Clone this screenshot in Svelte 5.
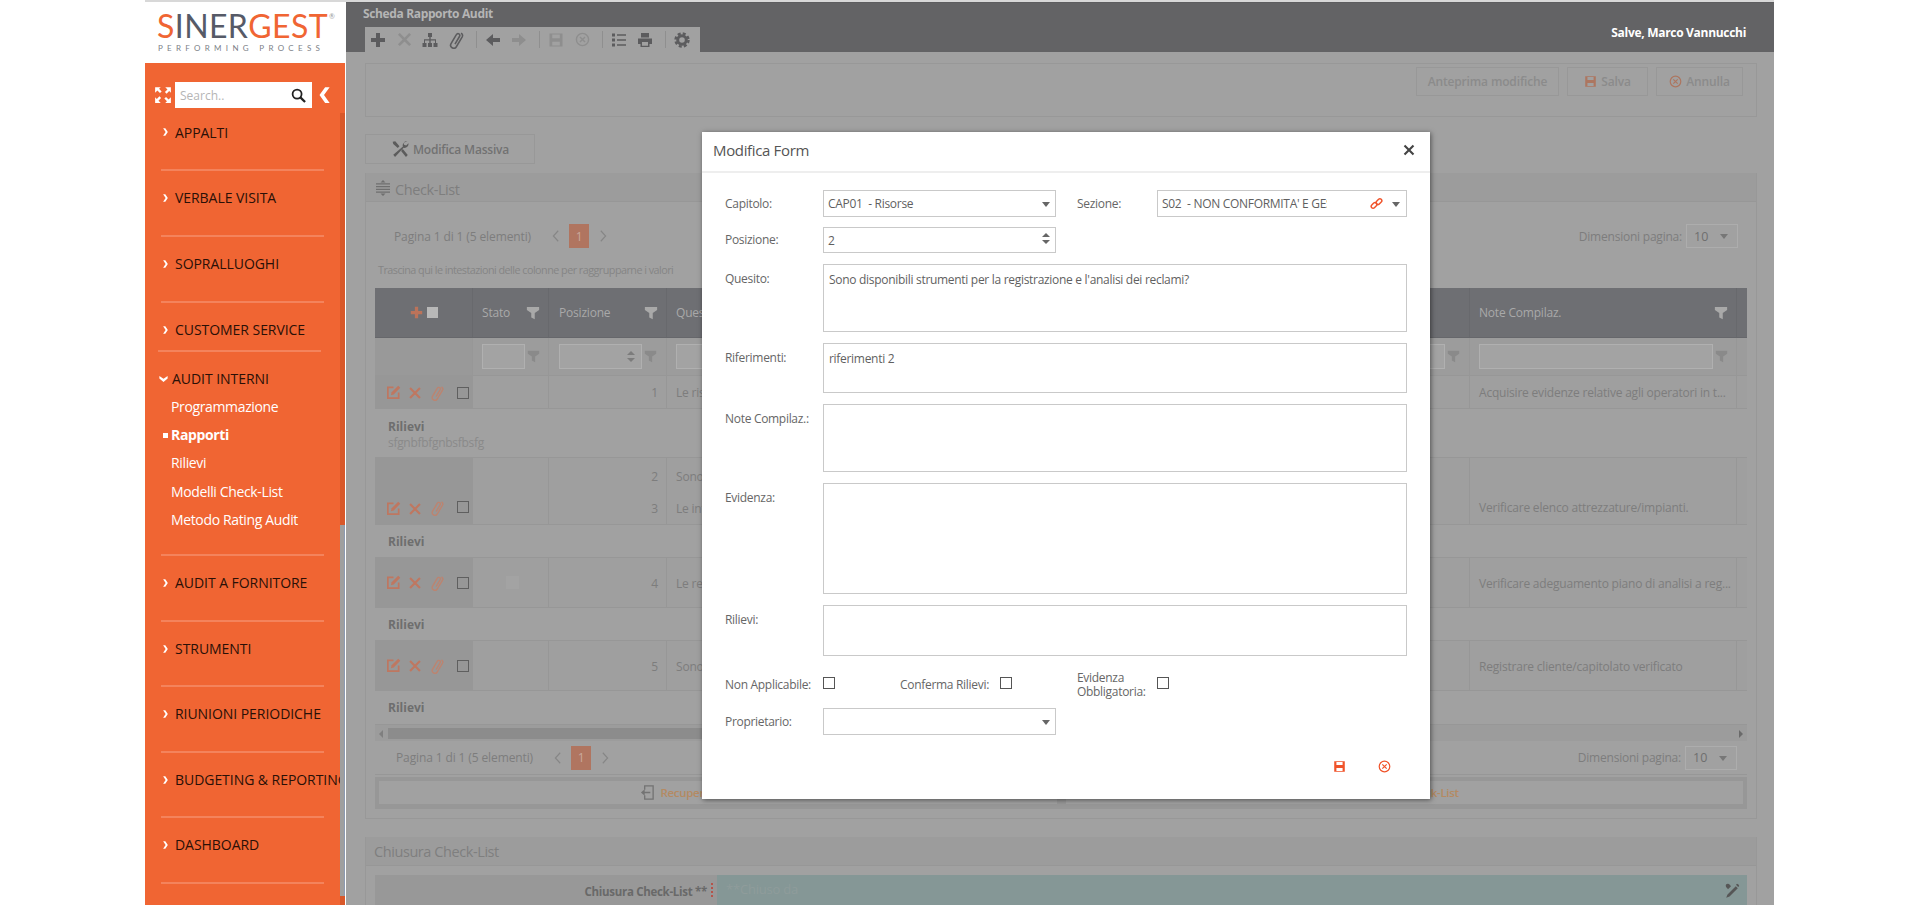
<script>
  const I = {
    plus: '<path fill="currentColor" d="M6 1h4v5h5v4h-5v5H6v-5H1V6h5z"/>',
    times: '<path fill="currentColor" d="M3 1l5 5 5-5 2 2-5 5 5 5-2 2-5-5-5 5-2-2 5-5-5-5z"/>',
    sitemap: '<path fill="currentColor" d="M6 1h4v4H8.700v2.300H14V11h1.500v4h-4v-4H13V8.500H8.700V11H10v4H6v-4h1.300V8.500H3V11h1.500v4h-4v-4H2V7.300h5.300V5H6z"/>',
    clip: '<path fill="none" stroke="currentColor" stroke-width="1.400" d="M12.500 1.900c1.400.8 1.600 2.200.9 3.500L8.300 14c-.9 1.400-2.500 1.700-3.800.9s-1.700-2.300-.9-3.700l4.700-8c.5-.9 1.500-1.100 2.300-.6s1 1.400.5 2.300l-4 6.800"/>',
    left: '<path fill="currentColor" d="M8 2v4h7v4H8v4L1 8z"/>',
    right: '<path fill="currentColor" d="M8 2v4H1v4h7v4l7-6z"/>',
    save: '<path fill="currentColor" d="M1.500 1.500h13v13h-13zM4.200 2.500v3.700h7.600V2.500zM4.200 9.800v3.700h7.600V9.800z" fill-rule="evenodd"/>',
    xc: '<circle cx="8" cy="8" r="6.500" fill="none" stroke="currentColor" stroke-width="1.500"/><path stroke="currentColor" stroke-width="1.500" d="M5.300 5.300l5.400 5.400m0-5.400l-5.400 5.400"/>',
    list: '<path fill="currentColor" d="M1 1.500h3v3H1zM1 6.500h3v3H1zM1 11.500h3v3H1zM6 2.300h9v1.400H6zM6 7.300h9v1.400H6zM6 12.300h9v1.400H6z"/>',
    print: '<path fill="currentColor" fill-rule="evenodd" d="M4 1h8v4.500H4zM1 6.500h14V12h-2.500v3h-9v-3H1zM5 10v3.800h6V10z"/>',
    gear: '<circle cx="8" cy="8" r="4.300" fill="none" stroke="currentColor" stroke-width="3"/><circle cx="8" cy="8" r="6.500" fill="none" stroke="currentColor" stroke-width="2.400" stroke-dasharray="3 2.100"/>',
    expand: '<path fill="currentColor" d="M1 1h5L4.500 2.500l2.300 2.300-1.500 1.500-2.300-2.300L1 6zM15 1v5l-1.500-1.500-2.300 2.300-1.500-1.500 2.300-2.300L10 1zM1 15v-5l1.500 1.500 2.300-2.300 1.500 1.500-2.300 2.300L6 15zM15 15h-5l1.500-1.500-2.300-2.300 1.500-1.500 2.300 2.300L15 10z"/>',
    search: '<circle cx="6.500" cy="6.500" r="4.800" fill="none" stroke="currentColor" stroke-width="1.900"/><path stroke="currentColor" stroke-width="2.400" d="M10 10l5 5"/>',
    chevL: '<path fill="currentColor" d="M9 1h4L8 8l5 7H9L4 8z"/>',
    chevR: '<path fill="currentColor" d="M5 2h3.500l4 6-4 6H5l4-6z"/>',
    chevD: '<path fill="currentColor" d="M2 5v-.500l6 4 6-4V8l-6 5-6-5z"/>',
    pl: '<path fill="none" stroke="currentColor" stroke-width="1.300" d="M10.500 2 5 8l5.500 6"/>',
    pr: '<path fill="none" stroke="currentColor" stroke-width="1.300" d="M5.500 2 11 8l-5.500 6"/>',
    tools: '<path fill="currentColor" d="M1.500 1.500 3.800 1l3.700 4.600L6 7.200 2 3.600zM14.500 1.200a3.500 3.500 0 0 0-3.900 4.600L2 13l1.600 2 7.600-8.100a3.500 3.500 0 0 0 4.300-4.100l-2 2-1.900-.6-.4-1.800zM9 9.700l1.500-1.600 4.400 5.200-1.600 1.700z"/>',
    collapse: '<path fill="currentColor" d="M1 6h14v1.200H1zM1 8.800h14V10H1zM1 3.200h14v1.200H1zM1 11.600h14v1.200H1zM8 0l2.500 2.500h-5zM8 16l-2.500-2.500h5z"/>',
    funnel: '<path fill="currentColor" d="M1 1h14v3.500L10 8v7l-4-2V8L1 4.500z"/>',
    edit: '<path fill="none" stroke="currentColor" stroke-width="1.800" d="M8 2.500H2v11.500h11.500V8"/><path fill="currentColor" d="M13 .8l2.200 2.200-7 7-3 .8.800-3z"/>',
    x2: '<path fill="currentColor" d="M3.200 1.500 8 6.300l4.800-4.800 1.700 1.700L9.700 8l4.800 4.800-1.700 1.700L8 9.700l-4.800 4.800-1.700-1.700L6.300 8 1.500 3.200z"/>',
    link: '<g fill="none" stroke="currentColor" stroke-width="1.800"><rect x="1" y="8" width="8" height="4.600" rx="2.300" transform="rotate(-45 5 10.300)"/><rect x="7" y="3.400" width="8" height="4.600" rx="2.300" transform="rotate(-45 11 5.700)"/></g>',
    signin: '<path fill="none" stroke="currentColor" stroke-width="1.400" d="M5 5V1h9v14H5v-4"/><path fill="currentColor" d="M1 8l4-3.500v2.700h6v1.600H5v2.700z"/>',
    pen: '<path fill="currentColor" d="M11.800 3.200l2 2-8.300 8.300-3.300 1.300 1.300-3.300zM2 1.500a3 3 0 0 1 4 .5l1 1.200-3 3-1-1.200a3 3 0 0 1-1-3.500zM13 .8l1.500.7.700 1.500-1 1-2.200-2.200z"/>'
  };

  const menuTop = ['APPALTI', 'VERBALE VISITA', 'SOPRALLUOGHI'];
  const menuBottom = ['AUDIT A FORNITORE', 'STRUMENTI', 'RIUNIONI PERIODICHE', 'BUDGETING & REPORTING', 'DASHBOARD'];
  const subs = ['Programmazione', 'Rapporti', 'Rilievi', 'Modelli Check-List', 'Metodo Rating Audit'];

  const rows = [
    { cls: 'h33', nums: ['1'], q: ['Le risorse'], notes: ['Acquisire evidenze relative agli operatori in t...'], detail: 'd49', text: 'sfgnbfbfgnbsfbsfg', icons: true },
    { cls: 'h67', nums: ['2', '3'], q: ['Sono disponibili', 'Le informazioni'], notes: ['', 'Verificare elenco attrezzature/impianti.'], detail: 'd33', icons: true },
    { cls: 'h50', nums: ['4'], q: ['Le registrazioni'], notes: ['Verificare adeguamento piano di analisi a reg...'], detail: 'd33', icons: true, dot: true },
    { cls: 'h50', nums: ['5'], q: ['Sono presenti'], notes: ['Registrare cliente/capitolato verificato'], detail: 'd34', icons: true }
  ];
</script>

{#snippet ic(name, size = 16)}
  <svg class="ic" width={size} height={size} viewBox="0 0 16 16" aria-hidden="true">{@html I[name]}</svg>
{/snippet}

{#snippet pager(cls)}
  <div class="pager {cls}">
    <span class="pinfo">Pagina 1 di 1 (5 elementi)</span>
    <span class="pnav">{@render ic('pl', 14)}</span>
    <span class="pbox">1</span>
    <span class="pnav">{@render ic('pr', 14)}</span>
    <span class="psize">Dimensioni pagina:</span>
    <span class="psel">10<i class="caret dimcaret"></i></span>
  </div>
{/snippet}

<div class="app">
  <aside class="side">
    <div class="logo">
      <div class="brand"><span class="o">S</span><span class="g">INER</span><span class="o">GEST</span><sup>®</sup></div>
      <div class="tag">PERFORMING PROCESS</div>
    </div>
    <nav class="menu">
      <div class="searchrow">
        <span class="exp">{@render ic('expand', 18)}</span>
        <div class="search"><span>Search..</span><span class="mag">{@render ic('search', 15)}</span></div>
        <span class="coll">{@render ic('chevL', 18)}</span>
      </div>
      {#each menuTop as m, n}
        <div class="item" class:first={n === 0}><span class="chev">{@render ic('chevR', 10)}</span>{m}</div>
      {/each}
      <div class="item cust"><span class="chev">{@render ic('chevR', 10)}</span>CUSTOMER SERVICE</div>
      <div class="item open">
        <div class="openhead"><span class="chev d">{@render ic('chevD', 11)}</span>AUDIT INTERNI</div>
        {#each subs as s, n}
          <div class="sub" class:active={n === 1}>{s}</div>
        {/each}
      </div>
      {#each menuBottom as m}
        <div class="item tail"><span class="chev">{@render ic('chevR', 10)}</span>{m}</div>
      {/each}
      <div class="sbar"><div class="sthumb"></div></div>
    </nav>
  </aside>

  <main class="main">
    <header class="top">
      <div class="topleft">
        <div class="title">Scheda Rapporto Audit</div>
        <div class="tab">
          <span class="tb dark">{@render ic('plus', 16)}</span>
          <span class="tb">{@render ic('times', 15)}</span>
          <span class="tb dark">{@render ic('sitemap', 16)}</span>
          <span class="tb dark">{@render ic('clip', 18)}</span>
          <span class="sep"></span>
          <span class="tb dark">{@render ic('left', 16)}</span>
          <span class="tb">{@render ic('right', 16)}</span>
          <span class="sep"></span>
          <span class="tb">{@render ic('save', 16)}</span>
          <span class="tb">{@render ic('xc', 15)}</span>
          <span class="sep"></span>
          <span class="tb dark">{@render ic('list', 16)}</span>
          <span class="tb dark">{@render ic('print', 16)}</span>
          <span class="sep"></span>
          <span class="tb dark">{@render ic('gear', 16)}</span>
        </div>
      </div>
      <div class="salve">Salve, Marco Vannucchi</div>
    </header>

    <div class="content">
      <section class="actions">
        <button class="btn a1">Anteprima modifiche</button>
        <button class="btn a2"><span class="bi">{@render ic('save', 13)}</span>Salva</button>
        <button class="btn a3"><span class="bi">{@render ic('xc', 13)}</span>Annulla</button>
      </section>

      <button class="massiva"><span class="mi">{@render ic('tools', 18)}</span>Modifica Massiva</button>

      <section class="panel check">
        <div class="phead head1"><span class="phi">{@render ic('collapse', 16)}</span>Check-List</div>
        <div class="pbody">
          {@render pager('first')}
          <div class="hint">Trascina qui le intestazioni delle colonne per raggrupparne i valori</div>
          <div class="grid">
            <div class="gh">
              <div class="c cmd hc"><span class="gplus">{@render ic('plus', 13)}</span><span class="gsq"></span></div>
              <div class="c stato"><span>Stato</span><span class="fn">{@render ic('funnel', 14)}</span></div>
              <div class="c pos"><span>Posizione</span><span class="fn">{@render ic('funnel', 14)}</span></div>
              <div class="c ques"><span>Quesito</span></div>
              <div class="c rif"><span>Riferimenti</span><span class="fn">{@render ic('funnel', 14)}</span></div>
              <div class="c note"><span>Note Compilaz.</span><span class="fn">{@render ic('funnel', 14)}</span></div>
              <div class="c pad"></div>
            </div>
            <div class="gf">
              <div class="c cmd"></div>
              <div class="c stato"><span class="fi"></span><span class="fn2">{@render ic('funnel', 13)}</span></div>
              <div class="c pos"><span class="fi"><i class="spin"><b></b><u></u></i></span><span class="fn2">{@render ic('funnel', 13)}</span></div>
              <div class="c ques"><span class="fi"></span></div>
              <div class="c rif"><span class="fi"></span><span class="fn2">{@render ic('funnel', 13)}</span></div>
              <div class="c note"><span class="fi"></span><span class="fn2">{@render ic('funnel', 13)}</span></div>
              <div class="c pad"></div>
            </div>
            {#each rows as r}
              <div class="gr {r.cls}">
                <div class="c cmd tools">
                  <span class="ti">{@render ic('edit', 15)}</span>
                  <span class="ti">{@render ic('x2', 14)}</span>
                  <span class="ti">{@render ic('clip', 16)}</span>
                  <span class="cb"></span>
                </div>
                <div class="c stato">{#if r.dot}<span class="dot"></span>{/if}</div>
                <div class="c pos lines right">{#each r.nums as v}<div>{v}</div>{/each}</div>
                <div class="c ques lines">{#each r.q as v}<div>{v}</div>{/each}</div>
                <div class="c rif"></div>
                <div class="c note lines">{#each r.notes as v}<div>{v}</div>{/each}</div>
                <div class="c pad"></div>
              </div>
              <div class="gd {r.detail}">
                <strong>Rilievi</strong>
                {#if r.text}<span>{r.text}</span>{/if}
              </div>
            {/each}
            <div class="hs">
              <span class="arl"></span><div class="thumb"></div><span class="arr"></span>
            </div>
            {@render pager('second')}
          </div>
          <div class="band">
            <div class="bandb"><span class="bandi">{@render ic('signin', 15)}</span><span class="bl">Recupera dalla Check-List</span></div>
            <div class="bandb"><span class="bl">Conferma Check-List</span></div>
          </div>
        </div>
      </section>

      <section class="panel chiusura">
        <div class="phead big">Chiusura Check-List</div>
        <div class="cbody">
          <div class="clabel"><strong>Chiusura Check-List **</strong><i class="dots"></i></div>
          <div class="cval"><span>**Chiuso da</span><span class="cpen">{@render ic('pen', 16)}</span></div>
        </div>
      </section>
    </div>

    <div class="modal">
      <div class="mhead">
        <span>Modifica Form</span>
        <span class="mclose">{@render ic('times', 12)}</span>
      </div>
      <div class="mbody">
        <div class="row r27">
          <label>Capitolo:</label>
          <div class="field half">CAP01&nbsp; - Risorse<i class="caret"></i></div>
          <label class="l2">Sezione:</label>
          <div class="field sez"><span class="clip">S02&nbsp; - NON CONFORMITA' E GESTIONE</span><span class="lnk">{@render ic('link', 13)}</span><i class="caret"></i></div>
        </div>
        <div class="row r26 tight">
          <label>Posizione:</label>
          <div class="field half">2<i class="spin big"><b></b><u></u></i></div>
        </div>
        <div class="row">
          <label class="ltop">Quesito:</label>
          <div class="area h68">Sono disponibili strumenti per la registrazione e l'analisi dei reclami?</div>
        </div>
        <div class="row">
          <label class="ltop">Riferimenti:</label>
          <div class="area h50">riferimenti 2</div>
        </div>
        <div class="row">
          <label class="ltop">Note Compilaz.:</label>
          <div class="area h68"></div>
        </div>
        <div class="row">
          <label class="ltop">Evidenza:</label>
          <div class="area h111"></div>
        </div>
        <div class="row">
          <label class="ltop">Rilievi:</label>
          <div class="area h51"></div>
        </div>
        <div class="row checks">
          <label>Non Applicabile:</label><span class="check1"></span>
          <label class="l3">Conferma Rilievi:</label><span class="check1"></span>
          <label class="l4">Evidenza Obbligatoria:</label><span class="check1"></span>
        </div>
        <div class="row r27">
          <label>Proprietario:</label>
          <div class="field half"><i class="caret"></i></div>
        </div>
        <div class="mfoot">
          <span>{@render ic('save', 13)}</span>
          <span>{@render ic('xc', 13)}</span>
        </div>
      </div>
    </div>
  </main>
</div>

<style>
  :global(body) {
    margin: 0;
    background: #fff;
    overflow: hidden;
  }
  * { box-sizing: border-box; }
  .ic { display: block; flex: none; }
  .app {
    height: 905px;
    width: 1629px;
    margin-left: 145px;
    display: flex;
    overflow: hidden;
    border-top: 2px solid #d8d8d8;
    font-family: "Open Sans", "Noto Sans", sans-serif;
    font-size: 12px;
    letter-spacing: -0.2px;
    color: #7f7f7f;
  }

  /* sidebar */
  .side { width: 201px; flex: none; display: flex; flex-direction: column; background: #fff; }
  .logo { height: 61px; padding: 9px 0 0 12px; color: #777; }
  .brand { font-family: Lato, "Open Sans", sans-serif; font-size: 32px; line-height: 30px; letter-spacing: 0.4px; display: flex; height: 30px; }
  .brand sup { font-size: 7px; line-height: 10px; color: #999; margin-left: 1px; }
  .o { color: #f06533; }
  .g { color: #565a67; }
  .tag { font-family: Lato, sans-serif; font-size: 8px; letter-spacing: 4.3px; color: #7c7f87; line-height: 10px; margin-top: 2px; padding-left: 1px; white-space: nowrap; }
  .menu { position: relative; flex: 1; width: 200px; background: #f06533; overflow: hidden; color: #2a1007; font-size: 14px; letter-spacing: -0.05px; }
  .searchrow { display: flex; align-items: center; height: 45px; padding: 19px 0 0 9px; }
  .exp { color: #fff; width: 21px; }
  .search { width: 137px; height: 26px; background: #fff; display: flex; align-items: center; justify-content: space-between; padding: 0 6px 0 5px; color: #b5b5b5; font-size: 12px; letter-spacing: 0; }
  .mag { color: #222; }
  .coll { color: #fff; margin-left: 3px; }
  .item { position: relative; height: 66px; margin: 0 21px 0 16px; padding: 17px 0 0 14px; line-height: 20px; border-bottom: 2px solid #f4835c; white-space: nowrap; }
  .item.first { height: 63px; padding-top: 15px; }
  .item.tail { height: 65.500px; }
  .item.cust { height: 49px; margin: 0 24px 0 13px; padding-left: 17px; }
  .item.open { height: 204px; padding: 17px 0 0 11px; margin: 0 21px 0 16px; }
  .chev { position: absolute; left: -1px; top: 22px; color: #fff; }
  .cust .chev { left: 2px; }
  .item.first .chev { top: 19px; }
  .chev.d { left: -3px; top: 21px; }
  .sub { color: #fff; height: 28.200px; line-height: 20px; padding-top: 3.500px; font-size: 14px; letter-spacing: -0.36px; position: relative; margin-left: -1px; }
  .openhead { height: 24.500px; }
  .sub.active { font-weight: 700; }
  .sub.active::before { content: ""; position: absolute; left: -8px; top: 11px; width: 5px; height: 5px; background: #fff; }
  .sbar { position: absolute; right: 0; top: 50px; bottom: 0; width: 5px; background: #d9582a; }
  .sthumb { position: absolute; left: 0; right: 0; top: 412px; height: 371px; background: #9f9f9f; border-right: 1px solid #8d9ab2; }

  /* main */
  .main { position: relative; flex: 1; min-width: 0; background: #a1a1a1; display: flex; flex-direction: column; }
  .top { height: 50px; background: #636365; display: flex; justify-content: space-between; flex: none; border-top: 1px solid #5d5d5f; }
  .topleft { display: flex; flex-direction: column; padding-left: 17px; }
  .title { font-weight: 700; font-size: 12px; letter-spacing: -0.36px; color: #b5b5b5; height: 24px; line-height: 22px; }
  .tab { margin-left: 2px; width: 335px; height: 25px; background: #a1a1a1; display: flex; align-items: center; color: #909090; }
  .tb { width: 26px; display: flex; justify-content: center; color: #8e8e8e; }
  .tb.dark { color: #5c5c5e; }
  .sep { width: 1px; height: 17px; background: #8f8f8f; margin: 0 3.500px 0 6.500px; }
  .salve { color: #fff; font-weight: 700; font-size: 12px; letter-spacing: -0.3px; padding: 21px 28px 0 0; line-height: 18px; }

  .content { padding: 11px 17px 0 19px; display: flex; flex-direction: column; flex: none; }
  .actions { height: 54px; border: 1px solid #989898; display: flex; justify-content: flex-end; gap: 8px; padding: 3px 13px 0 0; flex: none; }
  button { font: inherit; letter-spacing: inherit; color: inherit; background: none; padding: 0; cursor: default; }
  .btn { height: 29px; border: 1px solid #989898; color: #8b8b8b; font-weight: 600; display: flex; align-items: center; justify-content: center; font-size: 12px; letter-spacing: -0.15px; }
  .a1 { width: 143px; }
  .a2 { width: 81px; }
  .a3 { width: 87px; }
  .bi { color: #ad7660; margin-right: 4px; }
  .massiva { margin-top: 17px; width: 170px; height: 30px; border: 1px solid #989898; display: flex; align-items: center; justify-content: center; gap: 4px; color: #727272; font-weight: 600; font-size: 12px; letter-spacing: -0.2px; flex: none; }
  .mi { color: #5c5c5c; }

  .panel { border: 1px solid #989898; border-top: none; margin-top: 9px; flex: none; }
  .phead { height: 29px; background: #9c9c9c; border-bottom: 1px solid #979797; display: flex; align-items: center; padding-left: 9px; font-size: 14.500px; color: #7e7e7e; letter-spacing: -0.42px; }
  .head1 { padding-top: 4px; }
  .phi { margin: -3px 4px 0 0; color: #6f6f6f; }
  .pbody { padding: 0 9px 10px; }
  .check { height: 646px; }

  .pager { display: flex; align-items: center; font-size: 12px; color: #7d7d7d; letter-spacing: -0.12px; }
  .pager.first { height: 24px; margin-top: 22px; padding-left: 19px; }
  .pager.second { height: 34px; padding-left: 21px; border-bottom: 1px solid #979797; }
  .pinfo { width: 134px; white-space: nowrap; }
  .pnav { width: 14px; margin: 0 7px 0 21px; color: #868686; }
  .pbox { width: 20px; height: 24px; background: #b07560; color: #c9a99c; display: flex; align-items: center; justify-content: center; margin-left: -1px; }
  .pbox + .pnav { margin: 0 0 0 7px; }
  .psize { margin-left: auto; margin-right: 4px; color: #7d7d7d; letter-spacing: -0.22px; }
  .psel { position: relative; width: 52px; height: 24px; border: 1px solid #adadad; display: flex; align-items: center; padding-left: 7px; color: #6f6f6f; margin-right: 9px; font-size: 12.500px; letter-spacing: 0; }
  .second .psel { margin-right: 10px; }
  .hint { font-size: 10.800px; color: #858585; line-height: 16px; margin: 14px 0 10px 3px; height: 16px; letter-spacing: -0.53px; white-space: nowrap; }

  .grid { width: 1372px; }
  .gh, .gf, .gr { display: flex; }
  .c { flex: none; display: flex; align-items: center; border-right: 1px solid #979797; }
  .cmd { width: 98px; }
  .stato { width: 76px; padding-left: 9px; }
  .pos { width: 118px; padding-left: 10px; }
  .ques { width: 653px; padding-left: 9px; }
  .rif { width: 150px; }
  .note { width: 267px; padding-left: 9px; }
  .pad { width: 10px; border-right: none; }
  .gh { height: 50px; background: #6e6f73; color: #a9a9a9; font-size: 12px; border-bottom: 1px solid #66676b; }
  .gh .c { border-right-color: #68696d; justify-content: space-between; padding-right: 8px; }
  .gh .note { padding-right: 8px; }
  .gh .rif { justify-content: flex-end; padding-right: 9px; }
  .fn { color: #a9a9a9; }
  .hc { justify-content: flex-start !important; padding-left: 35px; gap: 4px; }
  .gplus { color: #bb735a; }
  .gsq { width: 11px; height: 11px; background: #b8b8b8; }
  .gf { height: 38px; background: #9c9c9c; border-bottom: 1px solid #979797; }
  .gf .cmd { background: #999; }
  .fi { position: relative; display: block; flex: none; height: 25px; border: 1px solid #b0b0b0; background: #a3a3a3; }
  .fn2 { color: #8a8a8a; margin-left: 2px; }
  .stato .fi { width: 43px; }
  .pos .fi { width: 83px; }
  .ques .fi { width: 640px; }
  .rif .fi { width: 125px; margin-left: 0; }
  .note .fi { width: 234px; }
  .rif.c { justify-content: flex-start; }
  .gf .rif { padding-left: 0; }
  .spin { position: absolute; right: 6px; top: 6px; display: block; width: 8px; }
  .spin b { display: block; border: 4px solid transparent; border-top: none; border-bottom: 4px solid #7c7c7c; margin-bottom: 3px; }
  .spin u { display: block; border: 4px solid transparent; border-bottom: none; border-top: 4px solid #7c7c7c; }
  .gr { background: #9f9f9f; border-bottom: 1px solid #979797; }
  .gr.h33 { height: 33px; }
  .gr.h67 { height: 67px; }
  .gr.h50 { height: 50px; }
  .tools { background: #979797; gap: 7px; padding: 0 0 0 11px; align-items: center; color: #bf7760; }
  .h67 .tools { align-items: flex-end; padding-bottom: 8px; }
  .h33 .tools { padding-top: 1px; }
  .ti { display: block; }
  .ti:nth-child(3) { color: #bc8470; }
  .cb { width: 12px; height: 12px; border: 1px solid #5f5f5f; margin: 0 0 0 5px; align-self: center; }
  .h67 .cb { align-self: flex-end; margin-bottom: 3px; }
  .dot { width: 13px; height: 13px; background: #a3a3a3; margin-left: 24px; }
  .lines { flex-direction: column; align-items: flex-start; justify-content: center; white-space: nowrap; overflow: hidden; color: #7d7d7d; font-size: 12px; letter-spacing: -0.2px; }
  .lines.right { align-items: flex-end; padding-right: 8px; }
  .lines div { line-height: 32px; height: 32px; }
  .h33 .lines div { line-height: 34px; }
  .h67 .lines { padding-top: 3px; }
  .h50 .lines { padding-top: 3px; }
  .gd { border-bottom: 1px solid #979797; background: #a1a1a1; padding: 9px 0 0 13px; display: flex; flex-direction: column; align-items: flex-start; color: #8a8a8a; line-height: 16px; letter-spacing: -0.3px; }
  .gd strong { color: #6e6e6e; font-weight: 700; letter-spacing: 0; }
  .d49 { height: 49px; padding-top: 10px; }
  .d33 { height: 33px; }
  .d34 { height: 34px; }
  .hs { height: 16px; display: flex; align-items: center; background: #9c9c9c; position: relative; }
  .thumb { position: absolute; left: 13px; top: 3px; height: 11px; width: 900px; background: #8c8c8c; }
  .arl { position: absolute; left: 4px; top: 5px; border: 4px solid transparent; border-left: none; border-right: 4px solid #7f7f7f; }
  .arr { position: absolute; right: 4px; top: 5px; border: 4px solid transparent; border-right: none; border-left: 4px solid #6a6a6a; }
  .band { margin-top: 2px; height: 32px; background: #979797; padding: 4px 4px 5px; display: flex; gap: 9px; width: 1372px; }
  .bandb { flex: 1; background: #a1a1a1; display: flex; align-items: center; justify-content: center; gap: 5px; color: #b58a62; font-weight: 600; font-size: 11.500px; letter-spacing: -0.3px; }
  .bandi { color: #737373; }

  .chiusura { margin-top: 18px; flex: none; height: 200px; }
  .phead.big { padding-left: 8px; color: #7f7f7f; }
  .cbody { display: flex; margin: 9px 9px 0; height: 50px; }
  .clabel { width: 342px; background: #989898; display: flex; justify-content: flex-end; align-items: flex-start; padding-top: 8px; color: #696969; line-height: 18px; font-size: 11.500px; letter-spacing: -0.3px; }
  .dots { width: 2px; height: 16px; margin: 0 4px 0 4px; background: repeating-linear-gradient(#b5544a 0 2px, transparent 2px 4px); flex: none; }
  .cval { flex: 1; background: #859796; display: flex; justify-content: space-between; padding: 5px 7px 0 9px; color: #8f9c9b; font-size: 13px; }
  .cpen { color: #565656; margin-top: 3px; }

  /* modal */
  .modal { position: absolute; left: 356px; top: 130px; width: 728px; height: 667px; background: #fff; box-shadow: 1px 1px 5px rgba(0,0,0,.5); color: #666; letter-spacing: -0.3px; }
  .mhead { height: 41px; border-bottom: 2px solid #eee; display: flex; align-items: center; justify-content: space-between; padding: 0 15px 3px 11px; font-size: 15px; color: #555; letter-spacing: -0.35px; }
  .mclose { color: #444; }
  .mbody { padding: 17px 23px 0; display: flex; flex-direction: column; gap: 11px; }
  .row { display: flex; align-items: center; }
  .tight { margin-top: -1px; }
  label { width: 98px; flex: none; font-size: 12px; color: #666; line-height: 18px; }
  label.ltop { align-self: flex-start; padding-top: 6px; }
  label.l2 { width: 80px; margin-left: 21px; }
  .field { position: relative; height: 100%; border: 1px solid #c9c9c9; display: flex; align-items: center; padding-left: 4px; font-size: 12px; color: #5f5f5f; }
  .r27 { height: 27px; }
  .r26 { height: 26px; }
  .half { width: 233px; }
  .sez { width: 250px; }
  .clip { display: block; width: 165px; overflow: hidden; white-space: nowrap; }
  .lnk { position: absolute; left: 212px; top: 6px; color: #f0532a; }
  .caret { position: absolute; right: 5px; top: 11px; border: 4.500px solid transparent; border-bottom: none; border-top: 5px solid #666; }
  .sez .caret { right: 6px; }
  .dimcaret { border-top-color: #777; right: 9px; top: 9px; }
  .spin.big { right: 5px; top: 5px; }
  .spin.big b { border-bottom-color: #666; }
  .spin.big u { border-top-color: #666; }
  .area { width: 584px; border: 1px solid #c9c9c9; padding: 6px 5px; font-size: 12px; line-height: 18px; color: #5f5f5f; }
  .h68 { height: 68px; }
  .area.h50 { height: 50px; }
  .h51 { height: 51px; }
  .h111 { height: 111px; }
  .checks { height: 26px; margin-top: 5px; margin-bottom: -1px; }
  .check1 { width: 12px; height: 12px; border: 1px solid #555; flex: none; margin-top: -4px; }
  .l3 { width: 100px; margin-left: 65px; }
  .l4 { width: 80px; margin-left: 65px; line-height: 14px; }
  .mfoot { display: flex; justify-content: flex-end; gap: 32px; color: #f0532a; padding: 14px 16px 0 0; }
</style>
